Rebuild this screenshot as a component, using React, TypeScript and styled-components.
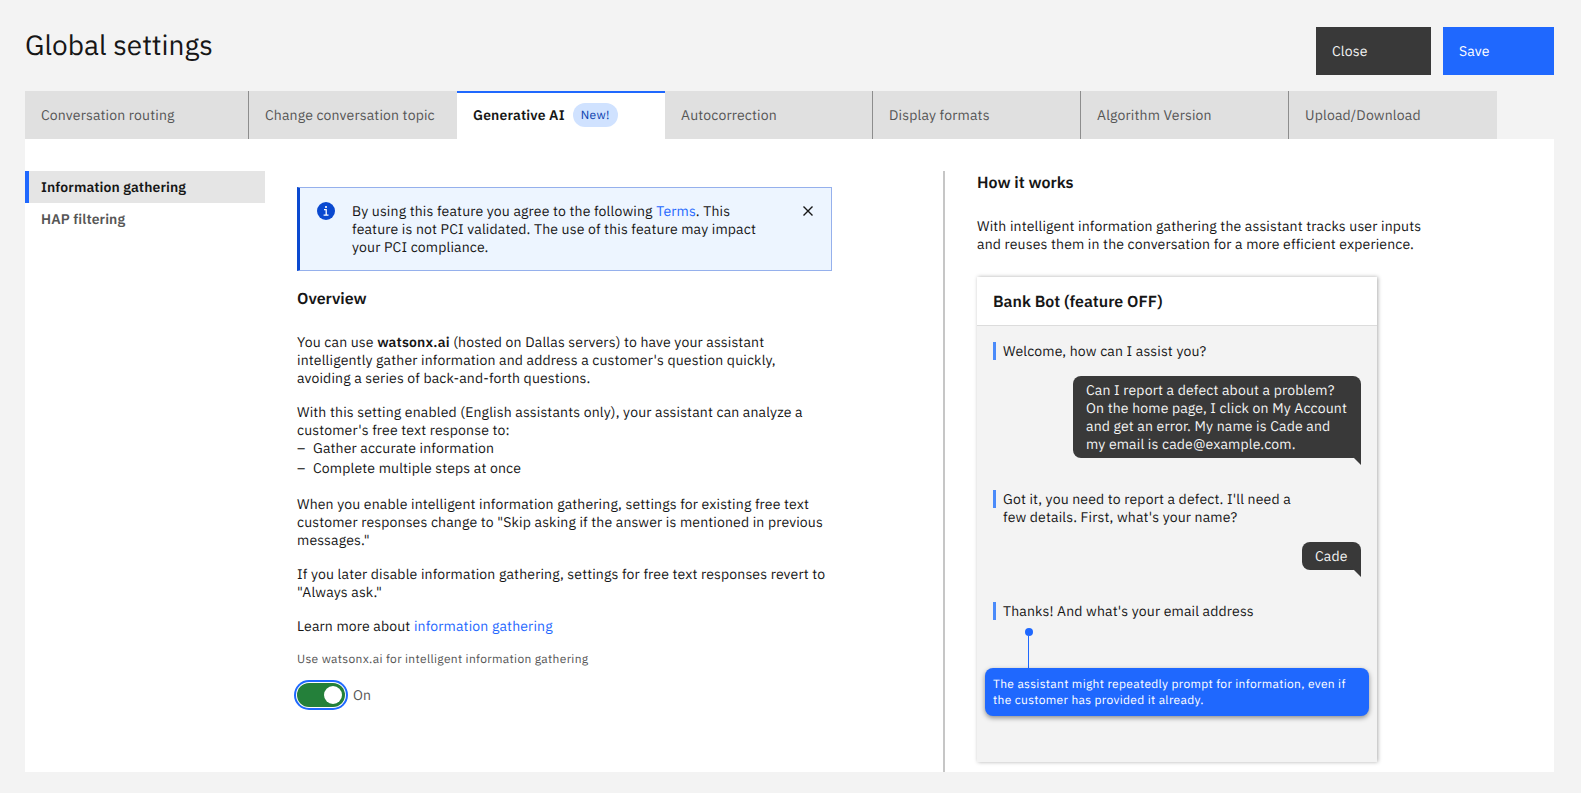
import React from "react";
import styled, { createGlobalStyle, css } from "styled-components";

const GlobalStyle = createGlobalStyle`
  *, *::before, *::after { box-sizing: border-box; }
  body {
    margin: 0;
    background: #f3f3f3;
    color: #161616;
    font-family: "IBM Plex Sans", Roboto, "Liberation Sans", sans-serif;
    font-size: 14px;
    line-height: 18px;
    letter-spacing: 0.16px;
    text-rendering: geometricPrecision;
    -webkit-font-smoothing: antialiased;
  }
  h1, h2, h3, p, ul { margin: 0; padding: 0; }
  button { font: inherit; letter-spacing: inherit; text-rendering: inherit; border: 0; cursor: pointer; }
`;

const Page = styled.div`
  display: flex;
  flex-direction: column;
  height: 793px;
  padding: 27px 27px 21px 25px;
`;

const Header = styled.header`
  display: flex;
  justify-content: space-between;
  height: 64px;
`;

const Title = styled.h1`
  font-size: 28px;
  line-height: 36px;
  font-weight: 400;
  letter-spacing: 0;
`;

const Actions = styled.div`
  display: flex;
  gap: 12px;
`;

const ActionButton = styled.button<{ $primary?: boolean }>`
  width: ${(p) => (p.$primary ? 111 : 115)}px;
  height: 48px;
  padding: 0 16px;
  text-align: left;
  color: ${(p) => (p.$primary ? "#fff" : "#f4f4f4")};
  background: ${(p) => (p.$primary ? "#1f68fe" : "#393939")};
`;

const TabBar = styled.nav`
  display: flex;
  height: 48px;
  flex: none;
`;

const Tab = styled.a<{ $width?: number; $selected?: boolean; $divider?: boolean }>`
  display: flex;
  align-items: center;
  width: ${(p) => p.$width ?? 208}px;
  padding-left: 16px;
  color: #565656;
  background: #e0e0e0;
  ${(p) => p.$divider && css`border-right: 1px solid #8d8d8d;`}
  ${(p) =>
    p.$selected &&
    css`
      color: #161616;
      background: #fff;
      font-weight: 600;
      box-shadow: inset 0 2px 0 #1f68fe;
    `}
`;

const NewTag = styled.span`
  display: flex;
  align-items: center;
  height: 24px;
  margin-left: 8px;
  padding: 2px 8px 0;
  width: 45px;
  border-radius: 12px;
  background: #d0e2ff;
  color: #0b3fae;
  font-size: 12px;
  font-weight: 400;
  letter-spacing: 0.32px;
`;

const Panel = styled.main`
  display: flex;
  flex: 1;
  padding-top: 32px;
  background: #fff;
`;

const SideNav = styled.nav`
  width: 240px;
  flex: none;
`;

const SideItem = styled.a<{ $active?: boolean }>`
  display: flex;
  align-items: center;
  height: 32px;
  padding-left: 12px;
  border-left: 4px solid ${(p) => (p.$active ? "#1f68fe" : "transparent")};
  background: ${(p) => (p.$active ? "#e5e5e5" : "transparent")};
  color: ${(p) => (p.$active ? "#161616" : "#565656")};
  font-weight: 600;
  letter-spacing: 0.1px;
`;

const Content = styled.section`
  width: 535px;
  margin: 16px 111px 0 32px;
  flex: none;
`;

const Notice = styled.div`
  display: flex;
  height: 84px;
  padding: 14px 18px 0 17px;
  border: 1px solid #95b0ec;
  border-left: 3px solid #0a49d0;
  background: #edf5ff;
`;

const NoticeText = styled.p`
  flex: 1;
  margin-left: 17px;
`;

const CloseIcon = styled.svg`
  flex: none;
  margin-top: 4px;
`;

const Line = styled.span`
  display: block;
  white-space: pre;
`;

const Link = styled.a`
  color: #1f68fe;
`;

const Strong = styled.strong`
  font-weight: 600;
`;

const Heading = styled.h2`
  padding-top: 1px;
  font-size: 16px;
  line-height: 22px;
  font-weight: 600;
  letter-spacing: 0;
`;

const OverviewHeading = styled(Heading)`
  margin: 16px 0 23px;
`;

const Paragraph = styled.p<{ $gap?: number }>`
  margin-bottom: ${(p) => p.$gap ?? 16}px;
`;

const DashList = styled.ul`
  list-style: none;
  display: flex;
  flex-direction: column;
  gap: 2px;
  margin-bottom: 18px;
`;

const DashItem = styled.li`
  display: flex;
  &::before {
    content: "–";
    width: 16px;
  }
`;

const ToggleLabel = styled.p`
  padding-top: 1px;
  color: #565656;
  font-size: 12px;
  line-height: 16px;
  letter-spacing: 0.32px;
`;

const ToggleRow = styled.div`
  display: flex;
  align-items: center;
  gap: 8px;
  margin-top: 15px;
  color: #565656;
`;

const Switch = styled.span`
  display: flex;
  justify-content: flex-end;
  width: 48px;
  height: 24px;
  padding: 3px;
  border-radius: 12px;
  background: #24803a;
  box-shadow: 0 0 0 1px #fff, 0 0 0 3px #1f68fe;
  &::after {
    content: "";
    width: 18px;
    height: 18px;
    border-radius: 50%;
    background: #fff;
  }
`;

const Aside = styled.aside`
  flex: 1;
  border-left: 2px solid #c6c6c6;
  padding-left: 32px;
`;

const AsideText = styled.p`
  margin: 23px 0 24px;
`;

const ChatCard = styled.div`
  width: 400px;
  height: 485px;
  background: #f3f3f3;
  box-shadow: 1px 0 4px rgba(0, 0, 0, 0.32);
`;

const ChatHeader = styled.h3`
  display: flex;
  align-items: center;
  height: 49px;
  && {
    padding: 2px 0 0 16px;
  }
  font-size: 16px;
  font-weight: 600;
  letter-spacing: 0;
  background: #fff;
  border-bottom: 1px solid #dcdcdc;
`;

const ChatBody = styled.div`
  display: flex;
  flex-direction: column;
  padding: 16px 16px 0;
`;

const BotMessage = styled.div`
  display: flex;
  gap: 7px;
  &::before {
    content: "";
    width: 3px;
    height: 18px;
    background: #4b8bfa;
  }
`;

const UserMessage = styled.div<{ $width: number }>`
  position: relative;
  align-self: flex-end;
  width: ${(p) => p.$width}px;
  margin: 16px 0 32px;
  padding: 5px 13px;
  border-radius: 8px;
  background: #393939;
  color: #f4f4f4;
  &::after {
    content: "";
    position: absolute;
    right: 0;
    bottom: -7px;
    width: 15px;
    height: 15px;
    background: #393939;
    clip-path: polygon(0 0, 100% 0, 100% 100%);
  }
`;

const Connector = styled.div`
  display: flex;
  flex-direction: column;
  align-items: center;
  width: 8px;
  margin: 8px 0 0 32px;
  &::before {
    content: "";
    width: 8px;
    height: 8px;
    border-radius: 50%;
    background: #1f68fe;
  }
  &::after {
    content: "";
    width: 1px;
    height: 32px;
    margin-right: 1px;
    background: #1f68fe;
  }
`;

const Callout = styled.div`
  height: 48px;
  margin: 0 -8px;
  padding: 9px 8px 7px;
  border-radius: 8px;
  background: #1f68fe;
  color: #fff;
  font-size: 12px;
  line-height: 16px;
  letter-spacing: 0.32px;
  box-shadow: 0 2px 5px rgba(0, 0, 0, 0.42);
`;

const InfoIcon = () => (
  <svg width="18" height="18" viewBox="0 0 18 18">
    <circle cx="9" cy="9" r="9" fill="#0a49d0" />
    <circle cx="9" cy="5" r="1.1" fill="#fff" />
    <path d="M7 7.7h2.2v5.2M6.6 13.1h4.9" fill="none" stroke="#fff" strokeWidth="1.3" />
  </svg>
);

const tabs = [
  { label: "Conversation routing", width: 224, divider: true },
  { label: "Change conversation topic" },
  { label: "Generative AI", selected: true, tag: "New!" },
  { label: "Autocorrection", divider: true },
  { label: "Display formats", divider: true },
  { label: "Algorithm Version", divider: true },
  { label: "Upload/Download" },
];

export default function App() {
  return (
    <>
      <GlobalStyle />
      <Page>
        <Header>
          <Title>Global settings</Title>
          <Actions>
            <ActionButton>Close</ActionButton>
            <ActionButton $primary>Save</ActionButton>
          </Actions>
        </Header>
        <TabBar>
          {tabs.map((t) => (
            <Tab key={t.label} $width={t.width} $divider={t.divider} $selected={t.selected}>
              {t.label}
              {t.tag && <NewTag>{t.tag}</NewTag>}
            </Tab>
          ))}
        </TabBar>
        <Panel>
          <SideNav>
            <SideItem $active>Information gathering</SideItem>
            <SideItem>HAP filtering</SideItem>
          </SideNav>
          <Content>
            <Notice>
              <InfoIcon />
              <NoticeText>
                <Line>
                  By using this feature you agree to the following <Link>Terms</Link>. This
                </Line>
                <Line>feature is not PCI validated. The use of this feature may impact</Line>
                <Line>your PCI compliance.</Line>
              </NoticeText>
              <CloseIcon width="10" height="10" viewBox="0 0 10 10">
                <path d="M.5.5l9 9M9.5.5l-9 9" fill="none" stroke="#161616" strokeWidth="1.4" />
              </CloseIcon>
            </Notice>
            <OverviewHeading>Overview</OverviewHeading>
            <Paragraph>
              <Line>
                You can use <Strong>watsonx.ai</Strong> (hosted on Dallas servers) to have your assistant
              </Line>
              <Line>intelligently gather information and address a customer's question quickly,</Line>
              <Line>avoiding a series of back-and-forth questions.</Line>
            </Paragraph>
            <Paragraph $gap={0}>
              <Line>With this setting enabled (English assistants only), your assistant can analyze a</Line>
              <Line>customer's free text response to:</Line>
            </Paragraph>
            <DashList>
              <DashItem>Gather accurate information</DashItem>
              <DashItem>Complete multiple steps at once</DashItem>
            </DashList>
            <Paragraph>
              <Line>When you enable intelligent information gathering, settings for existing free text</Line>
              <Line>customer responses change to "Skip asking if the answer is mentioned in previous</Line>
              <Line>messages."</Line>
            </Paragraph>
            <Paragraph>
              <Line>If you later disable information gathering, settings for free text responses revert to</Line>
              <Line>"Always ask."</Line>
            </Paragraph>
            <Paragraph>
              Learn more about <Link>information gathering</Link>
            </Paragraph>
            <ToggleLabel>Use watsonx.ai for intelligent information gathering</ToggleLabel>
            <ToggleRow>
              <Switch role="switch" aria-checked="true" />
              <span>On</span>
            </ToggleRow>
          </Content>
          <Aside>
            <Heading>How it works</Heading>
            <AsideText>
              <Line>With intelligent information gathering the assistant tracks user inputs</Line>
              <Line>and reuses them in the conversation for a more efficient experience.</Line>
            </AsideText>
            <ChatCard>
              <ChatHeader>Bank Bot (feature OFF)</ChatHeader>
              <ChatBody>
                <BotMessage>Welcome, how can I assist you?</BotMessage>
                <UserMessage $width={288}>
                  <Line>Can I report a defect about a problem?</Line>
                  <Line>On the home page, I click on My Account</Line>
                  <Line>and get an error. My name is Cade and</Line>
                  <Line>my email is cade@example.com.</Line>
                </UserMessage>
                <BotMessage>
                  <div>
                    <Line>Got it, you need to report a defect. I'll need a</Line>
                    <Line>few details. First, what's your name?</Line>
                  </div>
                </BotMessage>
                <UserMessage $width={59}>Cade</UserMessage>
                <BotMessage>Thanks! And what's your email address</BotMessage>
                <Connector />
                <Callout>
                  <Line>The assistant might repeatedly prompt for information, even if</Line>
                  <Line>the customer has provided it already.</Line>
                </Callout>
              </ChatBody>
            </ChatCard>
          </Aside>
        </Panel>
      </Page>
    </>
  );
}
